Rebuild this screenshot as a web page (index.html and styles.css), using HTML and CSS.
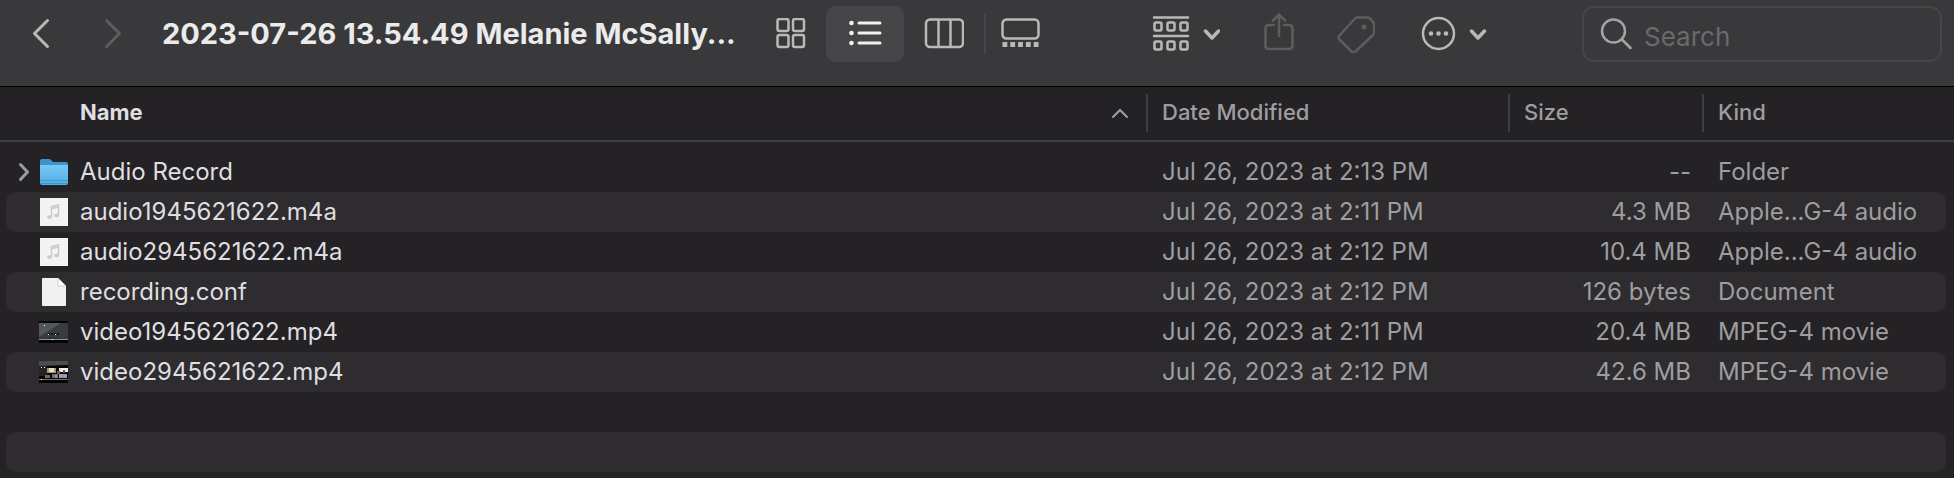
FILE: index.html
```html
<!DOCTYPE html>
<html lang="en">

<head>
    <meta charset="UTF-8">
    <title>2023-07-26 13.54.49 Melanie McSally...</title>
    <link rel="stylesheet" href="styles.css">
</head>

<body>
    <header class="toolbar">
        <nav class="history">
            <button type="button" class="tool nav-button" aria-label="Back">
                <svg width="20" height="32" viewBox="0 0 20 32"><path d="M16.500 2.500L3.500 15.500l13 13" class="line"/></svg>
            </button>
            <button type="button" class="tool nav-button" aria-label="Forward" disabled>
                <svg width="20" height="32" viewBox="0 0 20 32"><path d="M3.500 2.500l13 13-13 13" class="line"/></svg>
            </button>
        </nav>
        <h1 class="title">2023-07-26 13.54.49 Melanie McSally...</h1>
        <div class="views">
            <button type="button" class="tool" aria-label="Icons">
                <svg width="32" height="32" viewBox="0 0 32 32" class="thin">
                    <rect x="2.500" y="1" width="11" height="12" rx="2"/>
                    <rect x="18" y="1" width="11" height="12" rx="2"/>
                    <rect x="2.500" y="17" width="11" height="12" rx="2"/>
                    <rect x="18" y="17" width="11" height="12" rx="2"/>
                </svg>
            </button>
            <button type="button" class="tool selected" aria-label="List" aria-pressed="true">
                <svg width="36" height="32" viewBox="0 0 36 32">
                    <path d="M12 5h21M12 15h21M12 25h21" class="line"/>
                    <circle cx="4.500" cy="5" r="2.300" class="dot"/>
                    <circle cx="4.500" cy="15" r="2.300" class="dot"/>
                    <circle cx="4.500" cy="25" r="2.300" class="dot"/>
                </svg>
            </button>
            <button type="button" class="tool columns" aria-label="Columns">
                <svg width="40" height="32" viewBox="0 0 40 32" class="thin">
                    <rect x="2" y="1.500" width="37" height="27.500" rx="4"/>
                    <path d="M14.500 1.500v27.500M26.500 1.500v27.500"/>
                </svg>
            </button>
            <span class="divider"></span>
            <button type="button" class="tool" aria-label="Gallery">
                <svg width="40" height="32" viewBox="0 0 40 32" class="thin">
                    <rect x="1.500" y="1.500" width="36" height="19" rx="4"/>
                    <path d="M1.500 26.500h36" stroke-width="5" stroke-dasharray="4.800 3"/>
                </svg>
            </button>
        </div>
        <div class="actions">
            <button type="button" class="tool wide" aria-label="Group">
                <svg width="68" height="36" viewBox="0 0 68 36" class="thin">
                    <path d="M2 1.500h34M2 20h34" stroke-linecap="round"/>
                    <rect x="2.500" y="6.500" width="7" height="8" rx="1.500"/>
                    <rect x="15.500" y="6.500" width="7" height="8" rx="1.500"/>
                    <rect x="28.500" y="6.500" width="7" height="8" rx="1.500"/>
                    <rect x="2.500" y="25.500" width="7" height="8" rx="1.500"/>
                    <rect x="15.500" y="25.500" width="7" height="8" rx="1.500"/>
                    <rect x="28.500" y="25.500" width="7" height="8" rx="1.500"/>
                    <path d="M53.500 15l6.500 7 6.500-7" class="arrow"/>
                </svg>
            </button>
            <button type="button" class="tool small" aria-label="Share" disabled>
                <svg width="30" height="42" viewBox="0 0 30 42" class="thin">
                    <path d="M10 12H5q-3.500 0-3.500 3.500v17.500Q1.500 36 5 36h20q3.500 0 3.500-3.500v-17Q28.500 12 25 12h-5M15 23V2M9 7.500L15 1.500l6 6" stroke-linecap="round"/>
                </svg>
            </button>
            <button type="button" class="tool small" aria-label="Tags" disabled>
                <svg width="38" height="38" viewBox="0 0 38 38" class="thin">
                    <path d="M20.500 2.500h10q1.500 0 2.500 1l3 3.500q1 1 1 2.500v8q0 1.500-1 2.500L18.500 36.500q-2 2-4 0L2.500 24.500q-2-2 0-4L18 3.500q1-1 2.500-1z" stroke-linejoin="round"/>
                    <circle cx="27" cy="12" r="2.500" class="dot"/>
                </svg>
            </button>
            <button type="button" class="tool more" aria-label="More">
                <svg width="66" height="36" viewBox="0 0 66 36" class="thin">
                    <circle cx="17.500" cy="17.500" r="15.500"/>
                    <circle cx="10" cy="17.500" r="2.300" class="dot"/>
                    <circle cx="17.500" cy="17.500" r="2.300" class="dot"/>
                    <circle cx="25" cy="17.500" r="2.300" class="dot"/>
                    <path d="M50.500 15l6.500 7 6.500-7" class="arrow"/>
                </svg>
            </button>
        </div>
        <label class="search">
            <svg width="32" height="34" viewBox="0 0 32 34">
                <circle cx="13.500" cy="14" r="11.500"/>
                <path d="M22 22.500l8.500 8.500"/>
            </svg>
            <input type="search" placeholder="Search" aria-label="Search">
        </label>
    </header>

    <table class="files">
        <colgroup>
            <col>
            <col class="col-date">
            <col class="col-size">
            <col class="col-kind">
        </colgroup>
        <thead>
            <tr>
                <th class="sorted">
                    <div class="heading">Name
                        <svg width="18" height="12" viewBox="0 0 18 12"><path d="M2 11l7-7 7 7"/></svg>
                    </div>
                </th>
                <th><div class="heading">Date Modified</div></th>
                <th><div class="heading">Size</div></th>
                <th><div class="heading">Kind</div></th>
            </tr>
        </thead>
        <tbody>
            <tr>
                <td>
                    <div class="file">
                        <svg class="disclosure" width="12" height="20" viewBox="0 0 12 20"><path d="M2.500 2.500L9.500 10l-7 7.500"/></svg>
                        <svg class="icon" width="30" height="30" viewBox="0 0 30 30">
                            <defs>
                                <linearGradient id="folder" x1="0" y1="0" x2="0" y2="1">
                                    <stop offset="0" stop-color="#76c8f5"/>
                                    <stop offset="1" stop-color="#52aee4"/>
                                </linearGradient>
                            </defs>
                            <path d="M1 4q0-2 2-2h7q1 0 2 1l2 2h13q2 0 2 2v19H1z" fill="#3f93cd"/>
                            <path d="M1 8h28v18q0 2-2 2H3q-2 0-2-2z" fill="url(#folder)"/>
                            <path d="M1 23.500h28M1 26.500h28" stroke="#3f97d1"/>
                        </svg>
                        <span>Audio Record</span>
                    </div>
                </td>
                <td>Jul 26, 2023 at 2:13 PM</td>
                <td class="size">--</td>
                <td>Folder</td>
            </tr>
            <tr>
                <td>
                    <div class="file">
                        <svg class="icon" width="30" height="30" viewBox="0 0 30 30">
                            <path d="M1 1h28v28H1z" fill="#f3f3f3"/>
                            <path d="M12.500 19.500V9.500l7-1.500v10.500M12.500 11.500l7-1.500" fill="none" stroke="#c9c9c9" stroke-width="1.500"/>
                            <ellipse cx="10.500" cy="20" rx="2.500" ry="1.800" fill="#c9c9c9"/>
                            <ellipse cx="17.500" cy="18.500" rx="2.500" ry="1.800" fill="#c9c9c9"/>
                        </svg>
                        <span>audio1945621622.m4a</span>
                    </div>
                </td>
                <td>Jul 26, 2023 at 2:11 PM</td>
                <td class="size">4.3 MB</td>
                <td>Apple...G-4 audio</td>
            </tr>
            <tr>
                <td>
                    <div class="file">
                        <svg class="icon" width="30" height="30" viewBox="0 0 30 30">
                            <path d="M1 1h28v28H1z" fill="#f3f3f3"/>
                            <path d="M12.500 19.500V9.500l7-1.500v10.500M12.500 11.500l7-1.500" fill="none" stroke="#c9c9c9" stroke-width="1.500"/>
                            <ellipse cx="10.500" cy="20" rx="2.500" ry="1.800" fill="#c9c9c9"/>
                            <ellipse cx="17.500" cy="18.500" rx="2.500" ry="1.800" fill="#c9c9c9"/>
                        </svg>
                        <span>audio2945621622.m4a</span>
                    </div>
                </td>
                <td>Jul 26, 2023 at 2:12 PM</td>
                <td class="size">10.4 MB</td>
                <td>Apple...G-4 audio</td>
            </tr>
            <tr>
                <td>
                    <div class="file">
                        <svg class="icon" width="30" height="30" viewBox="0 0 30 30">
                            <path d="M3 2q0-1 1-1h15l8 8v19q0 1-1 1H4q-1 0-1-1z" fill="#f1f1f1"/>
                            <path d="M19 1l8 8h-8z" fill="#fff" stroke="#bcbcbc" stroke-width=".700"/>
                        </svg>
                        <span>recording.conf</span>
                    </div>
                </td>
                <td>Jul 26, 2023 at 2:12 PM</td>
                <td class="size">126 bytes</td>
                <td>Document</td>
            </tr>
            <tr>
                <td>
                    <div class="file">
                        <svg class="icon" width="30" height="30" viewBox="0 0 30 30">
                            <path d="M0 4h29v22H0z" fill="#050505"/>
                            <path d="M0 6h29v16H0z" fill="#383c40"/>
                            <path d="M0 6h22L0 20z" fill="#53565a"/>
                            <path d="M0 22.500h29" stroke="#8c9093"/>
                            <path d="M9 17h11" stroke="#111" stroke-width="2" stroke-dasharray="2 1"/>
                            <path d="M9 17.500h1M16 17.500h1M5 8.500h1M13 22.500h1" stroke="#fff"/>
                            <path d="M9 21h11" stroke="#24272a"/>
                        </svg>
                        <span>video1945621622.mp4</span>
                    </div>
                </td>
                <td>Jul 26, 2023 at 2:11 PM</td>
                <td class="size">20.4 MB</td>
                <td>MPEG-4 movie</td>
            </tr>
            <tr>
                <td>
                    <div class="file">
                        <svg class="icon" width="30" height="30" viewBox="0 0 30 30">
                            <path d="M0 4h29v22H0z" fill="#050505"/>
                            <path d="M0 4h29v4L0 9z" fill="#4b4d4f"/>
                            <path d="M0 9h8v10H0z" fill="#222426"/>
                            <path d="M8 11h9v5H8z" fill="#a8947b"/>
                            <path d="M10 11h5v4h-5z" fill="#e6dccb"/>
                            <path d="M20 11h9v4h-9z" fill="#f0eeea"/>
                            <path d="M18 14h3v3h-3zM24 13h2v3h-2z" fill="#77563e"/>
                            <path d="M6 18h5v3H6z" fill="#8d6548"/>
                            <path d="M13 17h6v4h-6z" fill="#606d8f"/>
                            <path d="M20 17h8v4h-8z" fill="#8fa3bf"/>
                            <path d="M16 18h2v3h-2zM23 18h2v3h-2z" fill="#b98a70"/>
                            <path d="M0 22.500h29" stroke="#707375"/>
                            <path d="M2 10.500h1M2 22.500h1M5 10.500h1" stroke="#fff"/>
                        </svg>
                        <span>video2945621622.mp4</span>
                    </div>
                </td>
                <td>Jul 26, 2023 at 2:12 PM</td>
                <td class="size">42.6 MB</td>
                <td>MPEG-4 movie</td>
            </tr>
            <!-- empty rows keep the stripes going -->
            <tr><td></td><td></td><td></td><td></td></tr>
            <tr><td></td><td></td><td></td><td></td></tr>
        </tbody>
    </table>
</body>

</html>
```

FILE: styles.css
```css
* {
    box-sizing: border-box;
}

body {
    margin: 0;
    min-height: 100vh;
    font-family: Inter, "Liberation Sans", sans-serif;
    font-size: 24px;
    color: #dfdee0;
    background-color: #242225;
}

/* toolbar */
.toolbar {
    display: flex;
    align-items: center;
    padding: 6px 12px 24px 5px;
    background-color: #39393b;
    border-bottom: 1px solid #000;
}

.history,
.views,
.actions {
    display: flex;
    align-items: center;
    flex: none;
}

.title {
    flex: 0 1 593px;
    min-width: 0;
    margin: 0;
    padding-left: 13px;
    overflow: hidden;
    white-space: nowrap;
    font-size: 29px;
    line-height: 40px;
    font-weight: 700;
    color: #ebebec;
}

.views {
    margin: 0 14px;
}

.tool {
    display: flex;
    align-items: center;
    justify-content: center;
    width: 70px;
    height: 56px;
    padding: 0;
    border: none;
    border-radius: 10px;
    background: none;
    color: #b9b9ba;
}

.tool:disabled {
    color: #5d5d5f;
}

.nav-button {
    width: 72px;
}

.selected {
    width: 78px;
    background-color: #464648;
    color: #f1f1f2;
}

.columns {
    width: 80px;
}

.small {
    width: 58px;
}

.wide {
    width: 90px;
}

.more {
    width: 100px;
}

.divider {
    width: 2px;
    height: 40px;
    background-color: #464648;
}

.actions {
    gap: 19px;
    margin-left: auto;
}

svg {
    display: block;
    flex: none;
    fill: none;
    stroke: currentColor;
}

.line {
    stroke-width: 3;
    stroke-linecap: round;
    stroke-linejoin: round;
}

.thin {
    stroke-width: 2.500;
}

.arrow {
    stroke-width: 3.500;
    stroke-linecap: round;
    stroke-linejoin: round;
}

.dot {
    fill: currentColor;
    stroke: none;
}

.search {
    display: flex;
    align-items: center;
    flex: 0 1 360px;
    min-width: 0;
    height: 56px;
    margin-left: 78px;
    padding: 0 16px;
    border: 2px solid #464648;
    border-radius: 12px;
    color: #a3a3a5;
}

.search svg {
    stroke-width: 2.500;
    stroke-linecap: round;
}

.search input {
    flex: 1;
    min-width: 0;
    margin-left: 12px;
    padding: 4px 0 0;
    border: none;
    outline: none;
    background: none;
    color: #dfdee0;
    font: inherit;
    font-size: 26px;
}

.search input::placeholder {
    color: #6a6a6c;
}

/* file list */
.files {
    width: 100%;
    table-layout: fixed;
    border-collapse: separate;
    border-spacing: 0;
}

.col-date {
    width: 362px;
}

.col-size {
    width: 194px;
}

.col-kind {
    width: 252px;
}

th {
    padding: 7px 0 8px;
    border-bottom: 2px solid #3f3e40;
    text-align: left;
    font-size: 22px;
    font-weight: 500;
    color: #9e9da0;
}

.heading {
    display: flex;
    align-items: center;
    justify-content: space-between;
    height: 38px;
    padding: 0 0 2px 14px;
    border-left: 2px solid #3f3e40;
}

.sorted {
    font-weight: 700;
    color: #dfdee0;
}

.sorted .heading {
    padding: 0 17px 2px 80px;
    border-left: none;
}

.sorted svg {
    stroke: #9e9da0;
    stroke-width: 2;
    stroke-linecap: round;
}

tbody::before {
    content: "";
    display: block;
    height: 10px;
}

td {
    height: 40px;
    padding: 0 0 0 16px;
    white-space: nowrap;
    line-height: 40px;
    color: #9e9da0;
    background-clip: padding-box;
}

td:first-child {
    padding-left: 0;
    border-left: 6px solid transparent;
    border-radius: 16px 0 0 16px / 10px;
    color: #dfdee0;
}

td:last-child {
    border-right: 8px solid transparent;
    border-radius: 0 18px 18px 0 / 10px;
}

tbody tr:nth-child(even) td {
    background-color: #2e2c2f;
}

td.size {
    padding-right: 11px;
    text-align: right;
}

.file {
    display: flex;
    align-items: center;
    height: 40px;
    padding-left: 33px;
}

.file .icon {
    margin-right: 11px;
    stroke: none;
}

.disclosure {
    margin: 0 9px 0 -21px;
    stroke: #9e9da0;
    stroke-width: 3;
    stroke-linecap: round;
    stroke-linejoin: round;
}
```
